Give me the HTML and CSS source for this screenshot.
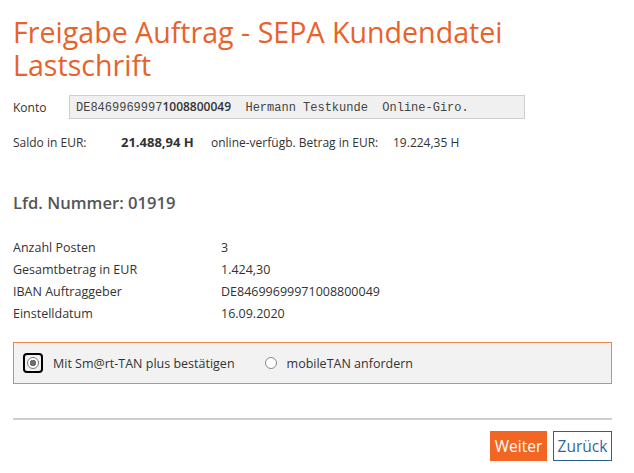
FILE: index.html
```html
<!DOCTYPE html>
<html lang="de">
<head>
  <meta charset="UTF-8">
  <title>Freigabe Auftrag</title>
  <link rel="stylesheet" href="styles.css">
</head>
<body>
  <main class="page">
    <h1 class="title">Freigabe Auftrag - SEPA Kundendatei Lastschrift</h1>

    <div class="konto">
      <span class="konto-label">Konto</span>
      <div class="konto-box">DE8469969997<b>1008800049</b>  Hermann Testkunde  Online-Giro.</div>
    </div>

    <div class="saldo">
      <span class="saldo-label">Saldo in EUR:</span>
      <span class="saldo-wert">21.488,94 H</span>
      <span class="saldo-online">online-verfügb. Betrag in EUR:</span>
      <span>19.224,35 H</span>
    </div>

    <h2 class="nummer">Lfd. Nummer: 01919</h2>

    <div class="details">
      <span>Anzahl Posten</span><span>3</span>
      <span>Gesamtbetrag in EUR</span><span>1.424,30</span>
      <span>IBAN Auftraggeber</span><span>DE84699699971008800049</span>
      <span>Einstelldatum</span><span>16.09.2020</span>
    </div>

    <div class="tan">
      <label class="tan-option">
        <span class="focus"><input type="radio" name="tan" checked></span>
        Mit Sm@rt-TAN plus bestätigen
      </label>
      <label class="tan-option">
        <input type="radio" name="tan">
        mobileTAN anfordern
      </label>
    </div>

    <hr class="trenner">

    <div class="buttons">
      <button class="btn btn-weiter">Weiter</button>
      <button class="btn btn-zurueck">Zurück</button>
    </div>
  </main>
</body>
</html>
```

FILE: styles.css
```css
body {
  margin: 0;
  background-color: #fff;
  font-family: "Open Sans", "Noto Sans", sans-serif;
  color: #333;
}
.page {
  width: 599px;
  padding: 15px 0 0 13px;
}
.title {
  margin: 0;
  font-weight: normal;
  font-size: 28.6px;
  line-height: 33px;
  color: #e8622c;
  width: 540px;
}

.konto {
  display: flex;
  align-items: center;
  margin-top: 14px;
  font-size: 12px;
}
.konto-label {
  width: 56px;
}
.konto-box {
  width: 448px;
  height: 22px;
  line-height: 22px;
  padding-left: 6px;
  background-color: #f0f0f0;
  border: 1px solid #cfcfcf;
  font-family: "Liberation Mono", monospace;
  font-size: 12px;
  color: #444;
  white-space: pre;
}
.konto-box b {
  font-family: "Open Sans", sans-serif;
  font-size: 12px;
  font-weight: 600;
  color: #333;
}

.saldo {
  display: flex;
  align-items: center;
  margin-top: 14px;
  font-size: 12px;
}
.saldo-label {
  width: 108px;
}
.saldo-wert {
  width: 90px;
  font-weight: bold;
  font-size: 13px;
}
.saldo-online {
  width: 182px;
}

.nummer {
  margin: 40px 0 0;
  font-size: 16.6px;
  font-weight: 600;
  color: #555;
}

.details {
  display: grid;
  grid-template-columns: 208px auto;
  grid-auto-rows: 22px;
  align-items: center;
  margin-top: 22px;
  font-size: 12.5px;
}

.tan {
  display: flex;
  align-items: center;
  gap: 30px;
  height: 40px;
  margin-top: 18px;
  padding-left: 9px;
  background-color: #f2f2f2;
  border: 1px solid #e8864f;
  font-size: 12.5px;
}
.tan-option {
  display: flex;
  align-items: center;
  gap: 10px;
}
.tan input {
  appearance: none;
  margin: 0;
  width: 12px;
  height: 12px;
  border: 1px solid #8a8a8a;
  border-radius: 50%;
  background-color: #fff;
}
.tan input:checked {
  border-color: #7a7a7a;
  background: radial-gradient(circle, #6e6e6e 0 3px, #fff 3.5px);
}
.focus {
  display: flex;
  padding: 2px;
  border: 2px solid #000;
  border-radius: 4px;
}

.trenner {
  margin: 34px 0 0;
  border: 0;
  height: 2px;
  background-color: #cfcfcf;
}

.buttons {
  display: flex;
  justify-content: flex-end;
  gap: 6px;
  margin-top: 11px;
}
.btn {
  width: 59px;
  height: 30px;
  padding: 0;
  font-family: "Open Sans", sans-serif;
  font-size: 15.5px;
  background: #fff;
  border: 1px solid #2e5f8f;
  color: #3367a0;
}
.btn-weiter {
  width: 57px;
  background-color: #f26522;
  border-color: #f26522;
  color: #fff;
}
```
